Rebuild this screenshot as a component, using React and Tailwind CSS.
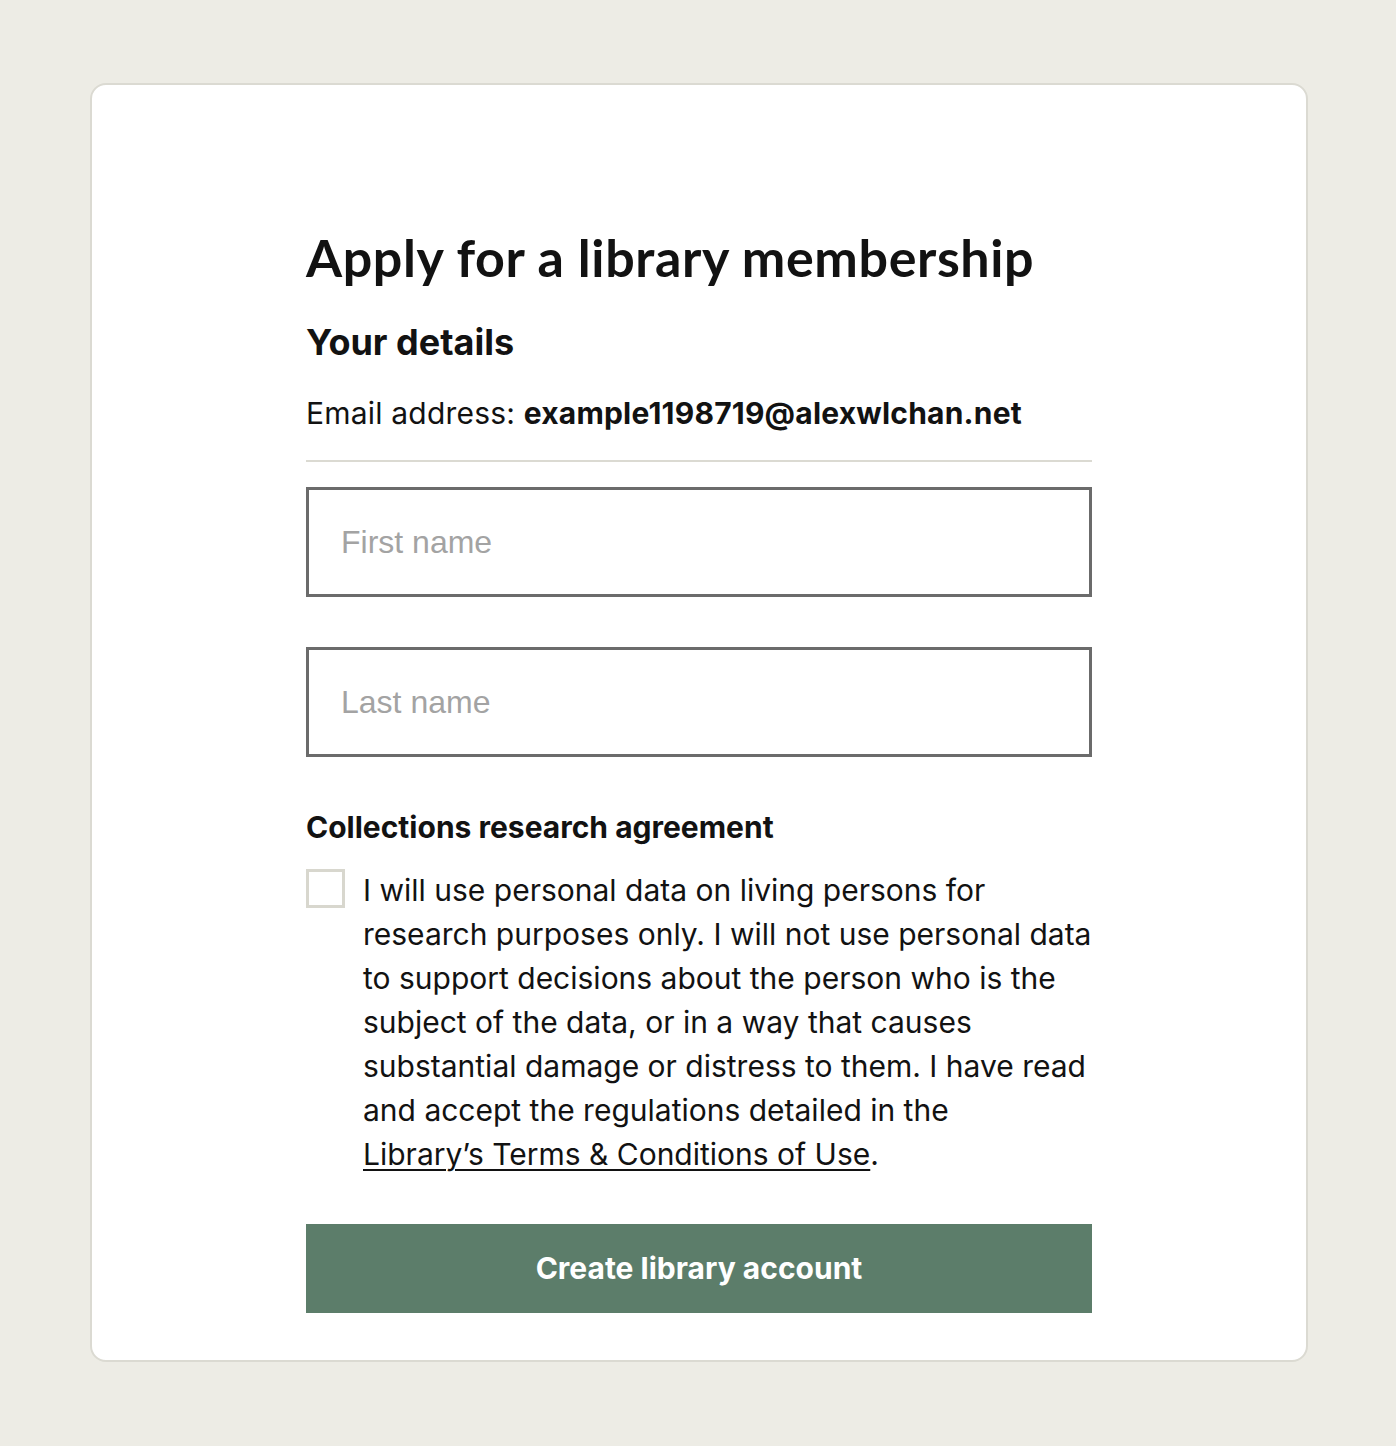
export default function App() {
	return (
		<div className="min-h-[1446px] w-full bg-[#edece5] pt-[83px] pb-[84px]" style={{ fontFamily: 'Inter, "Liberation Sans", sans-serif' }}>
			<div className="ml-[90px] mr-[88px] rounded-[16px] border-2 border-[#dbdad2] bg-white pt-[142px] pb-[47px]">
				<form className="mx-auto w-[786px] text-[#121212]" onSubmit={(e) => e.preventDefault()}>
					<h1 className="text-[52px] font-bold leading-[60px] tracking-[0.6px]" style={{ fontFamily: 'Lato, "Noto Sans", sans-serif' }}>
						Apply for a library membership
					</h1>

					{/* Your details */}
					<h2 className="mt-[33px] text-[36px] font-bold leading-[44px]">Your details</h2>
					<p className="mt-[27px] text-[30px] leading-[44px] tracking-[0.2px]">
						Email address: <strong className="font-bold">example1198719@alexwlchan.net</strong>
					</p>
					<hr className="mt-[25px] border-t-2 border-[#dbdad2]" />

					<input
						type="text"
						placeholder="First name"
						className="mt-[25px] block h-[110px] w-full border-[3px] border-[#6b6b6b] px-[32px] text-[32px] placeholder:text-[#a3a3a3] focus:outline-none"
						style={{ fontFamily: '"Liberation Sans", Arial, sans-serif' }}
					/>
					<input
						type="text"
						placeholder="Last name"
						className="mt-[50px] block h-[110px] w-full border-[3px] border-[#6b6b6b] px-[32px] text-[32px] placeholder:text-[#a3a3a3] focus:outline-none"
						style={{ fontFamily: '"Liberation Sans", Arial, sans-serif' }}
					/>

					{/* Agreement */}
					<h3 className="mt-[48px] text-[30px] font-bold leading-[44px]">Collections research agreement</h3>
					<label className="mt-[19px] flex items-start gap-[18px]">
						<span className="mt-[1px] block h-[39px] w-[39px] shrink-0 border-[3px] border-[#d8d7ce] bg-white" />
						<span className="text-[30px] leading-[44px]">
							I will use personal data on living persons for research purposes only. I will not use personal data to support decisions about the person who is the subject of the data, or in a way that causes substantial damage or distress to them. I have read and accept the regulations detailed in the{' '}
							<a href="#" className="whitespace-nowrap underline decoration-2 underline-offset-[4px]">Library’s Terms &amp; Conditions of Use</a>.
						</span>
					</label>

					<button
						type="submit"
						className="mt-[48px] block h-[89px] w-full bg-[#5c7d6a] text-[30px] font-bold text-white"
					>
						Create library account
					</button>
				</form>
			</div>
		</div>
	);
}
